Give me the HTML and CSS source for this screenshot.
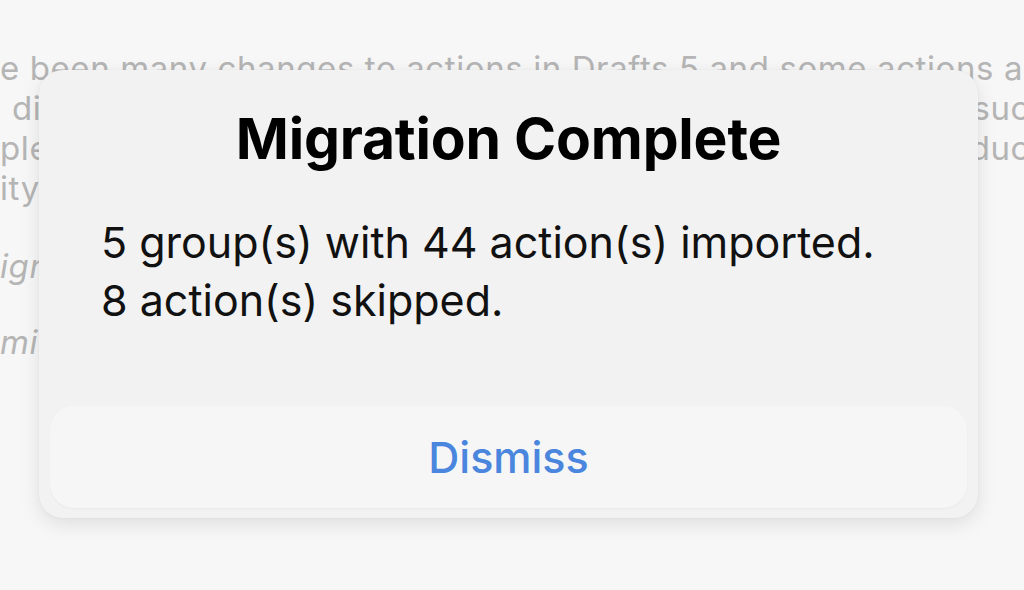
FILE: index.html
```html
<!DOCTYPE html>
<html lang="en">
<head>
<meta charset="utf-8">
<link rel="stylesheet" href="styles.css">
</head>
<body>
<div class="screen">
  <div class="doc">
    <div class="line">e been many changes to actions in Drafts 5 and some actions are</div>
    <div class="line split"><span class="indent">di</span><span class="cut">suc</span></div>
    <div class="line split"><span>ple</span><span class="cut">duc</span></div>
    <div class="line">ity</div>
    <div class="line italic gap">igr</div>
    <div class="line italic gap2">mi</div>
  </div>
  <div class="alert">
    <h1 class="title">Migration Complete</h1>
    <p class="message">5 group(s) with 44 action(s) imported.<br>8 action(s) skipped.</p>
    <button class="dismiss">Dismiss</button>
  </div>
</div>
</body>
</html>
```

FILE: styles.css
```css
html, body {
  margin: 0;
  padding: 0;
  background: #f8f8f8;
}
.screen {
  position: relative;
  width: 1024px;
  height: 590px;
  overflow: hidden;
  background: #f7f7f7;
  font-family: Inter, "Noto Sans", sans-serif;
}
.doc {
  padding-top: 48px;
  color: #b5b5b5;
  font-size: 33px;
  line-height: 40px;
  letter-spacing: 0.6px;
  white-space: nowrap;
}
.line {
  height: 40px;
  overflow: hidden;
}
.split {
  display: flex;
  justify-content: space-between;
}
.indent { padding-left: 12px; }
.cut { margin-right: -6px; }
.italic { font-style: italic; }
.gap { margin-top: 38px; }
.gap2 { margin-top: 36px; }
.alert {
  position: absolute;
  left: 39px;
  top: 70px;
  width: 939px;
  height: 448px;
  box-sizing: border-box;
  background: #f2f2f2;
  border-radius: 24px;
  box-shadow: 0 6px 20px rgba(0,0,0,0.10), 0 0 3px rgba(0,0,0,0.05);
  display: flex;
  flex-direction: column;
  padding: 35px 11px 10px;
}
.title {
  margin: 0;
  text-align: center;
  font-size: 57px;
  font-weight: 700;
  line-height: 68px;
  color: #000;
  letter-spacing: -0.2px;
}
.message {
  margin: 40px 0 0 51px;
  font-size: 43px;
  line-height: 58px;
  color: #111;
}
.dismiss {
  margin-top: auto;
  height: 102px;
  border: 0;
  border-radius: 24px;
  background: #f6f6f6;
  color: #4a85de;
  font-family: inherit;
  font-size: 43px;
  font-weight: 500;
  box-shadow: 0 1px 2px rgba(0,0,0,0.04);
}
```
